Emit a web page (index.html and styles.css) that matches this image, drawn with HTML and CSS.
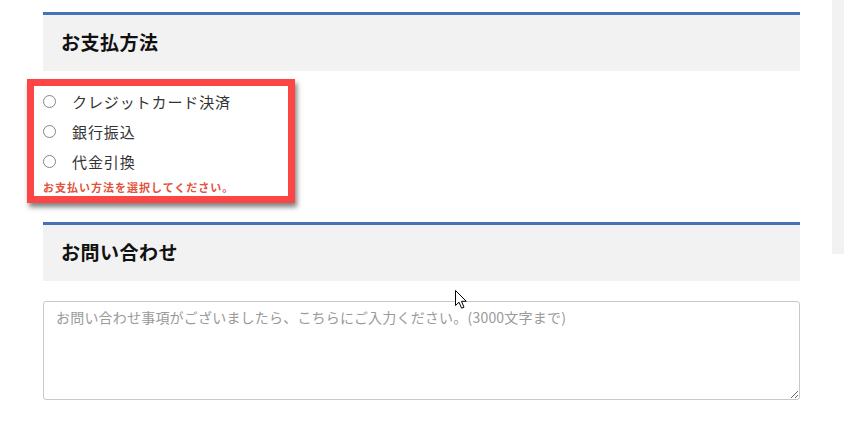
FILE: index.html
```
<!DOCTYPE html>
<html lang="ja">
<head>
<meta charset="utf-8">
<title>お支払方法</title>
<link rel="stylesheet" href="styles.css">
</head>
<body>
<div class="page">
  <main class="main">
    <h2 class="section-title">お支払方法</h2>
    <div class="choices">
      <label class="choice"><input type="radio" name="pay"><span>クレジットカード決済</span></label>
      <label class="choice"><input type="radio" name="pay"><span>銀行振込</span></label>
      <label class="choice"><input type="radio" name="pay"><span>代金引換</span></label>
      <p class="error">お支払い方法を選択してください。</p>
    </div>
    <h2 class="section-title second">お問い合わせ</h2>
    <textarea class="inquiry" placeholder="お問い合わせ事項がございましたら、こちらにご入力ください。(3000文字まで)"></textarea>
  </main>
  <aside class="side"></aside>
</div>
<svg class="cursor" width="13" height="20" viewBox="0 0 13 20"><path d="M0.5 0.5 L0.5 15.5 L4 12.2 L6.6 18.2 L9 17.2 L6.5 11.3 L11.3 11.3 Z" fill="#fff" stroke="#000" stroke-width="1" stroke-linejoin="miter"/></svg>
</body>
</html>
```
FILE: styles.css
```
html, body {
  margin: 0;
  padding: 0;
  background: #fff;
}
body {
  font-family: "Noto Sans CJK JP", "Noto Sans", sans-serif;
  color: #333;
  position: relative;
  overflow: hidden;
  height: 447px;
}
.page {
  display: flex;
  align-items: flex-start;
  padding-left: 43px;
}
.main {
  width: 757px;
  flex: none;
}
.side {
  flex: none;
  width: 12px;
  height: 254px;
  margin-left: 32px;
  background: #f2f2f2;
}
.section-title {
  margin: 12px 0 0;
  border-top: 3px solid #4573b7;
  background: #f2f2f2;
  height: 59px;
  box-sizing: border-box;
  display: flex;
  align-items: center;
  padding: 0 0 3px 18px;
  font-size: 19px;
  font-weight: bold;
  color: #111;
  letter-spacing: 0.5px;
}
.section-title.second {
  margin-top: 28px;
}
.choices {
  position: relative;
  padding-top: 15px;
}
.choices::after {
  content: "";
  position: absolute;
  left: -16px;
  top: 8px;
  width: 268px;
  height: 124px;
  box-sizing: border-box;
  border: 7px solid #fc4545;
  box-shadow: 2px 4px 5px rgba(0, 0, 0, 0.5);
  pointer-events: none;
}
.choice {
  display: flex;
  align-items: center;
  height: 30px;
  font-size: 15px;
  letter-spacing: 0.9px;
  color: #333;
}
.choice input {
  appearance: none;
  -webkit-appearance: none;
  width: 13px;
  height: 13px;
  margin: 0 16px 0 0;
  border: 1px solid #858585;
  border-radius: 50%;
  background: #fff;
  box-sizing: border-box;
  flex: none;
}
.error {
  margin: 4px 0 0;
  font-size: 11px;
  line-height: 14px;
  font-weight: bold;
  color: #e2523c;
  letter-spacing: 1px;
}
.inquiry {
  display: block;
  margin-top: 20px;
  width: 757px;
  height: 99px;
  box-sizing: border-box;
  border: 1px solid #c9c9c9;
  border-radius: 3px;
  padding: 5px 12px;
  font-family: "Noto Sans CJK JP", "Noto Sans", sans-serif;
  font-size: 14px;
  line-height: 20px;
  letter-spacing: 0.2px;
  color: #333;
  resize: vertical;
}
.inquiry::placeholder {
  color: #9a9a9a;
}
.cursor {
  position: absolute;
  left: 455px;
  top: 290px;
}
```
